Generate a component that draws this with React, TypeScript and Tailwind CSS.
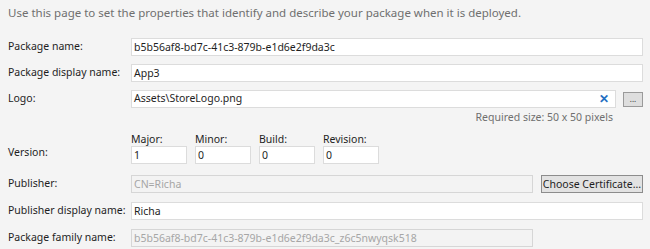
import React from "react";

const Input = ({ value, disabled, className = "" }: { value: string; disabled?: boolean; className?: string }) => (
  <div
    className={
      "h-[18px] border flex items-center px-[2px] leading-none whitespace-nowrap overflow-hidden " +
      (disabled ? "bg-[#f3f3f3] border-[#d6d6d6] text-[#a6a6a6] " : "bg-white border-[#dcdcdc] text-[#1e1e1e] ") +
      className
    }
  >
    {value}
  </div>
);

export default function App() {
  return (
    <div className="w-[650px] h-[249px] bg-[#f4f4f4] font-['Noto_Sans',sans-serif] text-[10.5px] text-[#1e1e1e] pl-[8px] pr-[7px] pt-[5px] overflow-hidden whitespace-nowrap">
      <div className="text-[#6f6f6f] leading-[16px] text-[11.5px]">
        Use this page to set the properties that identify and describe your package when it is deployed.
      </div>
      <div className="grid grid-cols-[123px_1fr] items-center gap-y-[8px] mt-[17px]">
        <div>Package name:</div>
        <Input value="b5b56af8-bd7c-41c3-879b-e1d6e2f9da3c" />
        <div>Package display name:</div>
        <Input value="App3" />
        <div>Logo:</div>
        <div className="flex items-center gap-[7px]">
          <div className="flex-1 h-[18px] bg-white border border-[#dcdcdc] flex items-center justify-between px-[2px]">
            <span>Assets\StoreLogo.png</span>
            <span className="text-[#1f6fc2] font-bold text-[12px] mr-[4px] leading-none">✕</span>
          </div>
          <div className="w-[20px] h-[15px] border border-[#9a9a9a] bg-[#dedede] text-[8px] leading-none flex items-center justify-center text-[#333]">
            ...
          </div>
        </div>
      </div>
      <div className="grid grid-cols-[123px_1fr] items-center">
        <div />
        <div className="text-right pr-[30px] text-[#6f6f6f] leading-[14px] mt-[2px]">Required size: 50 x 50 pixels</div>
      </div>
      <div className="grid grid-cols-[123px_1fr] items-end mt-[8px]">
        <div className="leading-[16px] pb-[4px]">Version:</div>
        <div className="flex gap-[8px]">
          {[
            ["Major:", "1"],
            ["Minor:", "0"],
            ["Build:", "0"],
            ["Revision:", "0"],
          ].map(([l, v]) => (
            <div key={l} className="flex flex-col w-[56px]">
              <div className="leading-[14px]">{l}</div>
              <Input value={v} className="h-[16px]" />
            </div>
          ))}
        </div>
      </div>
      <div className="grid grid-cols-[123px_1fr] items-center gap-y-[9px] mt-[11px]">
        <div>Publisher:</div>
        <div className="flex items-center gap-[8px]">
          <Input value="CN=Richa" disabled className="flex-1" />
          <div className="h-[18px] w-[102px] border border-[#8c8c8c] bg-[#e2e2e2] flex items-center justify-center leading-none">
            Choose Certificate...
          </div>
        </div>
        <div>Publisher display name:</div>
        <Input value="Richa" />
        <div>Package family name:</div>
        <Input value="b5b56af8-bd7c-41c3-879b-e1d6e2f9da3c_z6c5nwyqsk518" disabled className="mr-[110px]" />
      </div>
    </div>
  );
}
